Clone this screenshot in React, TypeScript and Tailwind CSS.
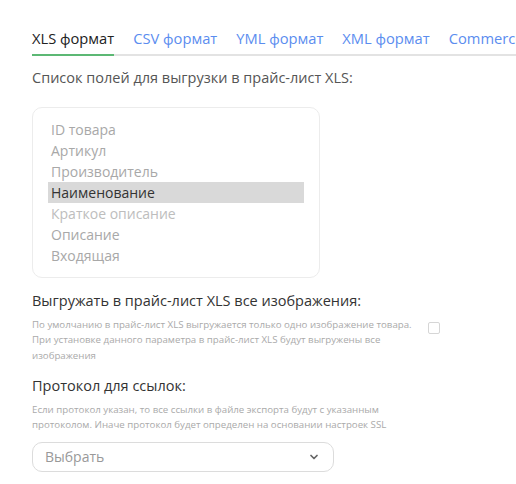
import { ChevronDown } from "lucide-react";

const tabs = ["XLS формат", "CSV формат", "YML формат", "XML формат", "CommerceML"];

const fields = [
  "ID товара",
  "Артикул",
  "Производитель",
  "Наименование",
  "Краткое описание",
  "Описание",
  "Входящая",
];

export default function App() {
  return (
    <div
      className="h-[484px] w-[516px] overflow-hidden bg-white pl-8 pt-[27px]"
      style={{ fontFamily: '"Open Sans", sans-serif' }}
    >
      <div className="flex gap-[19px] whitespace-nowrap border-b-2 border-[#e3e3e3] text-[14.7px]">
        {tabs.map((t, i) => (
          <div
            key={t}
            className={
              i === 0
                ? "-mb-[2px] border-b-2 border-[#5cb874] pb-[5px] text-[#222]"
                : "pb-[5px] text-[#5b8def]"
            }
          >
            {t}
          </div>
        ))}
      </div>

      <div className="mt-[11px] text-[14.5px] text-[#555]">
        Список полей для выгрузки в прайс-лист XLS:
      </div>

      <div className="mt-[18px] w-[288px] rounded-[10px] border border-[#ececec] px-[15px] py-[11px] text-[14px] leading-[21px]">
        {fields.map((f, i) => (
          <div
            key={f}
            className={
              i === 3
                ? "bg-[#d9d9d9] pl-[3px] text-[#333]"
                : i === 4
                ? "pl-[3px] text-[#bdbdbd]"
                : "pl-[3px] text-[#a8a8a8]"
            }
          >
            {f}
          </div>
        ))}
      </div>

      <div className="mt-[12px] text-[14.5px] text-[#333]">
        Выгружать в прайс-лист XLS все изображения:
      </div>
      <div className="mt-[5px] flex items-start">
        <div className="w-[388px] text-[9.7px] leading-[15.5px] text-[#aaa]">
          По умолчанию в прайс-лист XLS выгружается только одно изображение
          товара. При установке данного параметра в прайс-лист XLS будут
          выгружены все изображения
        </div>
        <div className="ml-[8px] mt-[5px] h-[12px] w-[12px] rounded-[2px] border border-[#d6d6d6]" />
      </div>

      <div className="mt-[12px] text-[14.5px] text-[#333]">Протокол для ссылок:</div>
      <div className="mt-[5px] w-[388px] text-[9.7px] leading-[15.5px] text-[#aaa]">
        Если протокол указан, то все ссылки в файле экспорта будут с указанным
        протоколом. Иначе протокол будет определен на основании настроек SSL
      </div>

      <div className="mt-[9px] flex h-[30px] w-[302px] items-center justify-between rounded-[10px] border border-[#dcdcdc] pl-[12px] pr-[13px] text-[14px] text-[#999]">
        <span>Выбрать</span>
        <ChevronDown size={12} strokeWidth={3.5} className="text-[#666]" />
      </div>
    </div>
  );
}
